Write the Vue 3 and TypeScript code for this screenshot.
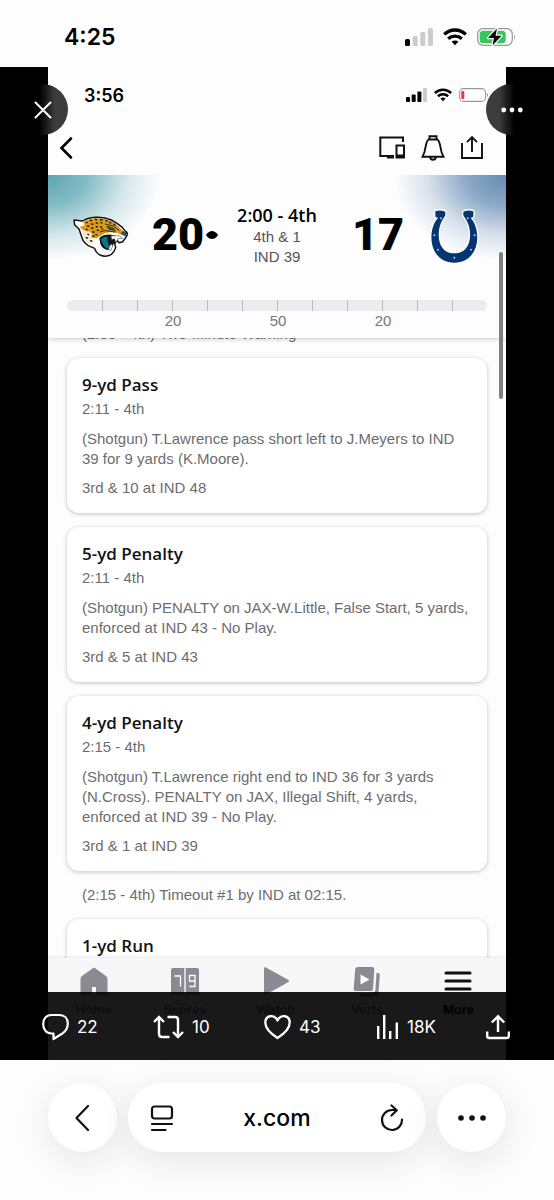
<script setup lang="ts">
interface Play {
  kind: 'play' | 'note'
  title?: string
  clock?: string
  text?: string
  down?: string
}

const feed: Play[] = [
  { kind: 'note', text: '(2:00 - 4th) Two-Minute Warning' },
  {
    kind: 'play',
    title: '9-yd Pass',
    clock: '2:11 - 4th',
    text: '(Shotgun) T.Lawrence pass short left to J.Meyers to IND 39 for 9 yards (K.Moore).',
    down: '3rd & 10 at IND 48',
  },
  {
    kind: 'play',
    title: '5-yd Penalty',
    clock: '2:11 - 4th',
    text: '(Shotgun) PENALTY on JAX-W.Little, False Start, 5 yards, enforced at IND 43 - No Play.',
    down: '3rd & 5 at IND 43',
  },
  {
    kind: 'play',
    title: '4-yd Penalty',
    clock: '2:15 - 4th',
    text: '(Shotgun) T.Lawrence right end to IND 36 for 3 yards (N.Cross). PENALTY on JAX, Illegal Shift, 4 yards, enforced at IND 39 - No Play.',
    down: '3rd & 1 at IND 39',
  },
  { kind: 'note', text: '(2:15 - 4th) Timeout #1 by IND at 02:15.' },
  { kind: 'play', title: '1-yd Run' },
]

const yardLabels = ['', '', '', '20', '', '', '50', '', '', '20', '', '']
</script>

<template>
  <div class="page">
    <header class="status">
      <span class="clock">4:25</span>
      <span class="indicators">
        <svg width="28" height="18" viewBox="0 0 28 18" aria-hidden="true">
          <rect x="0" y="11" width="5" height="7" rx="1.6" fill="#000" />
          <rect x="7.7" y="8" width="5" height="10" rx="1.6" fill="#ccc" />
          <rect x="15.3" y="4" width="5" height="14" rx="1.6" fill="#ccc" />
          <rect x="23" y="0" width="5" height="18" rx="1.6" fill="#ccc" />
        </svg>
        <svg width="24" height="18" viewBox="0 0 24 18" fill="none" stroke="#000" stroke-width="3.3" aria-hidden="true">
          <path d="M1.2 6.4C7.5 .5 16.5 .5 22.8 6.4" />
          <path d="M5.2 10.7C9 7.2 15 7.2 18.8 10.7" />
          <path d="M8.6 13.6C10.5 12 13.5 12 15.4 13.6L12 17.3Z" fill="#000" stroke="none" />
        </svg>
        <svg width="39" height="18" viewBox="0 0 39 18" aria-hidden="true">
          <rect x=".7" y=".7" width="34.6" height="16.6" rx="5.5" fill="#fff" stroke="#999" stroke-width="1.3" />
          <rect x="2.7" y="2.7" width="26" height="12.6" rx="3.5" fill="#34c759" />
          <path d="M37 6.5Q39 9 37 11.5Z" fill="#999" />
          <path d="M20 .5L11 10H17L15.5 17.5L24.5 7.8H18.5Z" fill="#000" stroke="#fff" stroke-width="2.4" paint-order="stroke" stroke-linejoin="round" />
        </svg>
      </span>
    </header>

    <main class="viewer">
      <section class="app">
        <div class="app-status">
          <span class="app-clock">3:56</span>
          <span class="app-indicators">
            <svg width="21" height="14" viewBox="0 0 21 14" aria-hidden="true">
              <rect x="0" y="9" width="4" height="5" rx="1" />
              <rect x="5.7" y="6.5" width="4" height="7.5" rx="1" />
              <rect x="11.4" y="3.5" width="4" height="10.5" rx="1" />
              <rect x="17" y="0" width="4" height="14" rx="1" fill="#ccc" />
            </svg>
            <svg width="18" height="14" viewBox="0 0 24 18" fill="none" stroke="#000" stroke-width="3.5" aria-hidden="true">
              <path d="M1.2 6.4C7.5 .5 16.5 .5 22.8 6.4" />
              <path d="M5.2 10.7C9 7.2 15 7.2 18.8 10.7" />
              <path d="M8.6 13.6C10.5 12 13.5 12 15.4 13.6L12 17.3Z" fill="#000" stroke="none" />
            </svg>
            <svg width="30" height="14" viewBox="0 0 30 14" aria-hidden="true">
              <rect x=".6" y=".6" width="26" height="12.8" rx="4" fill="#fff" stroke="#999" stroke-width="1.1" />
              <rect x="2.3" y="3" width="3" height="8" rx="1" fill="#ff2d42" />
              <path d="M28 5Q30 7 28 9Z" fill="#999" />
            </svg>
          </span>
        </div>

        <nav class="app-nav" aria-label="Game">
          <button type="button" aria-label="Back">
            <svg width="14" height="24" viewBox="0 0 14 24" fill="none" stroke="#000" stroke-width="2.6" stroke-linecap="round">
              <path d="M12 2.5L2.500 12L12 21.500" />
            </svg>
          </button>
          <span class="nav-tools">
            <button type="button" aria-label="Devices">
              <svg width="28" height="26" viewBox="0 0 28 26" fill="none" stroke="#111" stroke-width="2">
                <path d="M25 7V2.5H2.300V21H16" />
                <path d="M9 20.500V23.500H16V20.500Z" fill="#111" stroke="none" />
                <path d="M18.500 10.500H26V22.500H18.500Z" />
                <path d="M18.500 21H26" stroke-width="3" />
              </svg>
            </button>
            <button type="button" aria-label="Alerts">
              <svg width="24" height="26" viewBox="0 0 24 26" fill="none" stroke="#111" stroke-width="1.9">
                <path d="M8.500 4.500V1.200H15.500V4.500" />
                <path d="M7.500 4.500H16.500Q18 5.500 18.800 9L20.500 17L22.500 21.700H1.500L3.500 17L5.200 9Q6 5.500 7.500 4.500Z" />
                <path d="M9 22Q9.500 24.800 12 24.800Q14.500 24.800 15 22" />
              </svg>
            </button>
            <button type="button" aria-label="Share">
              <svg width="24" height="26" viewBox="0 0 24 26" fill="none" stroke="#111" stroke-width="1.9">
                <path d="M2 8V23H22V8" />
                <path d="M12 17V2.500M7 7.200L12 2.200L17 7.200" />
              </svg>
            </button>
          </span>
        </nav>

        <div class="game">
          <div class="matchup">
            <svg width="64" height="54" viewBox="0 0 192 162" role="img" aria-label="Jacksonville">
              <path d="M12 36L38 39Q50 30 76 28Q102 26 124 36L142 47L157 58L164 68Q173 72 172 80L166 91L158 101L148 104L140 97L134 107L137 119Q133 133 124 139Q108 149 90 141Q77 133 74 121L55 113Q39 103 35 86L27 63L14 50Z" fill="#fff" stroke="#161412" stroke-width="4.500" stroke-linejoin="round" />
              <path d="M39 42Q66 27 101 32Q122 35 141 51L156 66L167 75L155 80L140 74L119 73L105 76L91 84L80 91L65 90L60 75L38 65L29 57L44 52Z" fill="#d89a1a" />
              <path d="M34 65L48 72L58 70L67 78L61 94L74 102L65 108L50 101L40 86Z" fill="#f3e8d4" />
              <path d="M88 90Q100 78 124 80L139 85L137 103L128 111Q124 125 111 126Q96 121 91 108Z" fill="#15171a" />
              <path d="M93 94Q103 83 112 88L114 107L122 117L112 122Q98 115 93 94Z" fill="#08778a" />
              <path d="M123 83L150 84L158 91L143 92L138 105L133 92L125 95ZM116 121L123 107L128 114L122 128Z" fill="#fff" stroke="#222" stroke-width="1.500" />
              <path d="M111 55L129 60L136 67L117 64ZM158 71L170 75L165 84L154 77Z" fill="#08778a" stroke="#111" stroke-width="2" />
              <path d="M105 48L130 54L148 68M89 72L105 68L137 72" fill="none" stroke="#2a1a08" stroke-width="2.600" />
              <g fill="none" stroke="#2a1a08" stroke-width="4.500" stroke-linecap="round">
                <path d="M49 43l2 1M61 37l3 1M76 34l3 1M92 35l4 1M108 38l3 1M119 43l3 2M132 49l3 2" />
                <path d="M53 54l3 1M65 48l3 1M79 45l3 1M93 44l2 1M65 60l3 1M79 56l3 0M92 57l3 0M49 64l2 1" />
                <path d="M68 72l4 0M82 67l3 0M96 64l2 0M54 79l2 1M69 84l3 0M49 89l3 1M62 98l3 1M78 81l2-1" />
              </g>
            </svg>
            <strong class="score">20</strong>
            <svg class="possession" width="12" height="8" viewBox="0 0 12 8" role="img" aria-label="Possession">
              <path d="M0 4C2 1 4 0 6 0S10 1 12 4C10 7 8 8 6 8S2 7 0 4Z" />
            </svg>
            <div class="situation">
              <strong>2:00 - 4th</strong>
              <span>4th &amp; 1</span>
              <span>IND 39</span>
            </div>
            <strong class="score away">17</strong>
            <svg width="60" height="70" viewBox="0 0 180 210" role="img" aria-label="Indianapolis">
              <path d="M34 34Q48 28 64 35V46L54 62C38 90 36 160 91 160C146 160 145 90 128 62L118 46V35Q134 28 148 34V50L140 54C174 90 168 188 91 188C14 188 8 90 42 54L34 50Z" fill="#063572" stroke="#fff" stroke-width="8" paint-order="stroke" stroke-linejoin="round" />
              <g fill="#a9c9ef">
                <circle cx="51" cy="55" r="3" /><circle cx="131" cy="55" r="3" />
                <circle cx="31" cy="106" r="3" /><circle cx="152" cy="106" r="3" />
                <circle cx="42" cy="149" r="3" /><circle cx="141" cy="149" r="3" />
                <circle cx="91" cy="173" r="3" />
              </g>
            </svg>
          </div>
          <div class="field">
            <div v-for="(label, i) in yardLabels" :key="i" class="yard"><span v-if="label">{{ label }}</span></div>
          </div>
        </div>

        <div class="feed">
          <div class="feed-list">
            <template v-for="(item, i) in feed" :key="i">
              <p v-if="item.kind === 'note'" class="note">{{ item.text }}</p>
              <article v-else class="card">
                <h2>{{ item.title }}</h2>
                <p v-if="item.clock" class="when">{{ item.clock }}</p>
                <p v-if="item.text" class="detail">{{ item.text }}</p>
                <p v-if="item.down">{{ item.down }}</p>
              </article>
            </template>
          </div>
        </div>

        <nav class="tabs" aria-label="Sections">
          <a href="#home">
            <svg width="32" height="32" viewBox="0 0 32 32"><path d="M14.500 3.400Q16 2 17.500 3.400L28 11Q29.500 12 29.500 14V30H18V22H14V30H2.500V14Q2.500 12 4 11Z" /></svg>
            <span>Home</span>
          </a>
          <a href="#scores">
            <svg width="32" height="32" viewBox="0 0 32 32">
              <path d="M4 3H15.300V30H2V5Q2 3 4 3ZM16.700 3H28Q30 3 30 5V30H16.700Z" />
              <path d="M5.500 11H11.500V21.500M26 16H20.500V10.500H26V21.500H20.500" fill="none" stroke="#fff" stroke-width="1.300" />
            </svg>
            <span>Scores</span>
          </a>
          <a href="#watch">
            <svg width="32" height="32" viewBox="0 0 32 32"><path d="M4 3.500Q4 1.500 6 2.500L28.500 15Q30 16 28.500 17L6 29.500Q4 30.500 4 28.500Z" /></svg>
            <span>Watch</span>
          </a>
          <a href="#verts">
            <svg width="32" height="32" viewBox="0 0 32 32">
              <path d="M7 2H21Q23.500 2 23.300 4.500L22 24Q21.800 26 20 26H4.500Q2.500 26 2.700 24L4.200 4Q4.500 2 7 2Z" />
              <path d="M25.500 8H27Q29 8 28.800 10L27.500 27Q27 31.500 23 31.500H11Q9 31.500 8.500 28.500H20.500Q24 28.500 24.400 25Z" />
              <path d="M9.500 9.500V19.500L18.500 14.500Z" fill="#fff" />
            </svg>
            <span>Verts</span>
          </a>
          <a href="#more" class="current">
            <svg width="32" height="32" viewBox="0 0 32 32" fill="none" stroke="#111" stroke-width="3" stroke-linecap="round"><path d="M4 8H28M4 16H28M4 24H28" /></svg>
            <span>More</span>
          </a>
        </nav>
      </section>

      <i class="scroll-thumb"></i>
      <button type="button" class="round close" aria-label="Close">
        <svg width="18" height="18" viewBox="0 0 18 18" fill="none" stroke="#fff" stroke-width="2" stroke-linecap="round"><path d="M1.500 1.500L16.500 16.500M16.500 1.500L1.500 16.500" /></svg>
      </button>
      <button type="button" class="round options" aria-label="Options">
        <svg width="22" height="6" viewBox="0 0 22 6" fill="#fff"><circle cx="2.700" cy="3" r="2.400" /><circle cx="11" cy="3" r="2.400" /><circle cx="19.300" cy="3" r="2.400" /></svg>
      </button>

      <div class="actions">
        <button type="button" aria-label="22 replies">
          <svg width="27" height="28" viewBox="0 0 27 28" fill="none" stroke="#fff" stroke-width="2.200" stroke-linejoin="round"><path d="M9.500 2H17C23 2 25.800 6 25.800 10.500C25.800 15 23.500 18.500 20 20.800L11.500 26V20.500H9.500C4 20.500 1.200 16 1.200 11.200C1.200 6 4 2 9.500 2Z" /></svg>
          <span>22</span>
        </button>
        <button type="button" aria-label="10 reposts">
          <svg width="31" height="28" viewBox="0 0 31 28" fill="none" stroke="#fff" stroke-width="2.400">
            <path d="M6 5V21Q6 24 9 24H16.500M1 9L6 4L11 9" />
            <path d="M14.500 4H22Q25 4 25 7V23M20 19L25 24L30 19" />
          </svg>
          <span>10</span>
        </button>
        <button type="button" aria-label="43 likes">
          <svg width="27" height="28" viewBox="0 0 27 28" fill="none" stroke="#fff" stroke-width="2.300" stroke-linejoin="round"><path d="M13.500 25C5 19.500 1.300 14 1.300 9.500C1.300 2.500 10 .5 13.500 7.500C17 .5 25.700 2.500 25.700 9.500C25.700 14 22 19.500 13.500 25Z" /></svg>
          <span>43</span>
        </button>
        <button type="button" aria-label="18K views">
          <svg width="24" height="28" viewBox="0 0 24 28" fill="none" stroke="#fff" stroke-width="2.400"><path d="M3.200 13V26M9.200 2V26M15.200 18V26M21.800 9.500V26" /></svg>
          <span>18K</span>
        </button>
        <button type="button" aria-label="Share post">
          <svg width="24" height="28" viewBox="0 0 24 28" fill="none" stroke="#fff" stroke-width="2.400"><path d="M1.200 18.500V23Q1.200 25 3.200 25H20.800Q22.800 25 22.800 23V18.500M12 19V3.500M5.800 9.500L12 3.300L18.200 9.500" /></svg>
        </button>
      </div>
    </main>

    <footer class="browser">
      <button type="button" class="disc" aria-label="Back">
        <svg width="16" height="28" viewBox="0 0 16 28" fill="none" stroke="#111" stroke-width="2.200" stroke-linecap="round" stroke-linejoin="round"><path d="M13 2L1.500 14L13 26" /></svg>
      </button>
      <div class="address">
        <button type="button" aria-label="Page settings">
          <svg width="24" height="28" viewBox="0 0 24 28" fill="none" stroke="#111" stroke-width="2.200" stroke-linecap="round"><rect x="2" y="2.500" width="20" height="12" rx="2.500" /><path d="M2 20H22M2 26H15.500" /></svg>
        </button>
        <button type="button" class="url">x.com</button>
        <button type="button" aria-label="Reload">
          <svg width="24" height="28" viewBox="0 0 24 28" fill="none" stroke="#111" stroke-width="2.200" stroke-linecap="round" stroke-linejoin="round"><path d="M22 15.500A10 10 0 1 1 12 6H16.500M11.500 1.500L16.800 6.200L11.500 11.500" /></svg>
        </button>
      </div>
      <button type="button" class="disc" aria-label="Menu">
        <svg width="28" height="6" viewBox="0 0 28 6" fill="#111"><circle cx="3" cy="3" r="2.800" /><circle cx="14" cy="3" r="2.800" /><circle cx="25" cy="3" r="2.800" /></svg>
      </button>
    </footer>
  </div>
</template>

<style>
body {
  margin: 0;
  background: #fdfdfd;
}
</style>

<style scoped>
.page {
  display: flex;
  flex-direction: column;
  height: 100vh;
  font-family: Inter, "Liberation Sans", sans-serif;
  color: #000;
}
.page * {
  box-sizing: border-box;
}
button {
  display: flex;
  align-items: center;
  justify-content: center;
  margin: 0;
  padding: 0;
  border: 0;
  background: none;
  color: inherit;
  font: inherit;
}
svg {
  display: block;
  flex: none;
}
p,
h2 {
  margin: 0;
}

.status {
  display: flex;
  flex: none;
  align-items: center;
  justify-content: space-between;
  height: 67px;
  padding: 7px 38px 0 64px;
}
.clock {
  font-size: 23px;
  font-weight: 600;
}
.indicators {
  display: flex;
  gap: 10px;
}

.viewer {
  position: relative;
  flex: 1;
  min-height: 0;
  padding: 0 48px;
  background: #000;
}
.app {
  display: flex;
  flex-direction: column;
  height: 100%;
  background: #fdfdfd;
  font-family: "Liberation Sans", Arial, sans-serif;
}
.app-status {
  display: flex;
  flex: none;
  align-items: center;
  justify-content: space-between;
  height: 56px;
  padding: 0 17px 0 36px;
}
.app-clock {
  font-family: Inter, "Liberation Sans", sans-serif;
  font-size: 18px;
  font-weight: 600;
}
.app-indicators {
  display: flex;
  gap: 7px;
}
.app-nav {
  display: flex;
  flex: none;
  align-items: center;
  justify-content: space-between;
  height: 52px;
  padding: 0 22px 2px 11px;
}
.nav-tools {
  display: flex;
  gap: 15px;
}

.game {
  position: relative;
  flex: none;
  height: 163px;
  background:
    radial-gradient(ellipse 112px 86px at 0 0, #5aa6b3 0%, rgba(90, 166, 179, 0.75) 35%, rgba(90, 166, 179, 0.25) 70%, rgba(90, 166, 179, 0) 100%),
    radial-gradient(ellipse 112px 86px at 100% 0, #648bb4 0%, rgba(100, 139, 180, 0.75) 35%, rgba(100, 139, 180, 0.25) 70%, rgba(100, 139, 180, 0) 100%),
    #fdfdfd;
  box-shadow: 0 3px 4px -1px rgba(0, 0, 0, 0.15);
}
.matchup {
  display: flex;
  align-items: center;
  height: 120px;
  padding: 0 22px;
}
.score {
  width: 54px;
  margin-left: 17px;
  font-family: Roboto, "Liberation Sans", sans-serif;
  font-size: 45px;
  font-weight: 900;
  line-height: 48px;
  text-align: center;
}
.away {
  width: 84px;
  margin: 0 4px 0 0;
}
.possession {
  margin-left: 1px;
}
.situation {
  display: flex;
  flex: 1;
  flex-direction: column;
  align-items: center;
  color: #555;
  font-size: 15px;
  line-height: 20px;
}
.situation strong {
  color: #000;
  font-family: "Open Sans", "Liberation Sans", sans-serif;
  font-size: 18px;
  font-weight: 600;
  line-height: 24px;
}
.field {
  display: grid;
  grid-template-columns: repeat(12, 1fr);
  height: 11px;
  margin: 5px 19px 0;
  border-radius: 6px;
  background: #ececee;
}
.yard {
  height: 11px;
  border-left: 1px solid #bcbcc0;
}
.yard:first-child {
  border-left: 0;
}
.yard span {
  display: block;
  width: 24px;
  margin: 11px 0 0 -12px;
  color: #777;
  font-size: 15px;
  line-height: 20px;
  text-align: center;
}

.feed {
  flex: 1;
  min-height: 0;
  overflow: hidden;
}
.feed-list {
  display: flex;
  flex-direction: column;
  gap: 14px;
  margin: -14px 19px 0;
  color: #6c6d6f;
  font-size: 15px;
  line-height: 20px;
}
.note {
  padding: 0 15px;
}
.card {
  flex: none;
  padding: 15px;
  border-radius: 12px;
  background: #fff;
  box-shadow: 0 1px 4px rgba(0, 0, 0, 0.24);
}
.card h2 {
  color: #121213;
  font-family: "Open Sans", "Liberation Sans", sans-serif;
  font-size: 17px;
  font-weight: 600;
  line-height: 24px;
}
.when {
  line-height: 24px;
}
.detail {
  margin: 8px 0 9px;
}

.tabs {
  position: relative;
  display: flex;
  flex: none;
  height: 102px;
  padding: 7px 2px 0 0;
  background: #f7f7f8;
  box-shadow: 0 -1px 3px rgba(0, 0, 0, 0.1);
}
.tabs a {
  display: flex;
  flex: 1;
  flex-direction: column;
  align-items: center;
  gap: 3px;
  color: #8b8a92;
  font-size: 13px;
  font-weight: 700;
  line-height: 20px;
  text-decoration: none;
}
.tabs svg {
  fill: currentColor;
}
.tabs .current {
  color: #000;
}

.scroll-thumb {
  position: absolute;
  top: 185px;
  right: 51px;
  width: 4px;
  height: 147px;
  border-radius: 2px;
  background: #808080;
}
.round {
  position: absolute;
  top: 17px;
  width: 51px;
  height: 51px;
  border-radius: 50%;
}
.close {
  left: 17px;
  background: linear-gradient(to right, #000 44%, #3c3c3c 74%);
}
.options {
  right: 17px;
  background: linear-gradient(to left, #000 44%, #3c3c3c 74%);
}
.actions {
  position: absolute;
  right: 0;
  bottom: 0;
  left: 0;
  display: grid;
  grid-template-columns: repeat(4, 1fr) auto;
  align-items: center;
  height: 68px;
  padding: 2px 44px 0 42px;
  background: rgba(0, 0, 0, 0.9);
  color: #fff;
  font-size: 17px;
}
.actions button {
  justify-content: flex-start;
  gap: 8px;
}

.browser {
  display: flex;
  flex: none;
  align-items: flex-start;
  gap: 11px;
  height: 140px;
  padding: 23px 48px 0;
  overflow: hidden;
  background: #fdfdfd;
}
.disc,
.address {
  height: 69px;
  border-radius: 35px;
  background: #fff;
  box-shadow: 0 8px 36px rgba(0, 0, 0, 0.1);
}
.disc {
  flex: none;
  width: 69px;
}
.address {
  display: flex;
  flex: 1;
  align-items: center;
  justify-content: space-between;
  padding: 0 22px;
}
.url {
  font-size: 23px;
  font-weight: 500;
}
</style>
